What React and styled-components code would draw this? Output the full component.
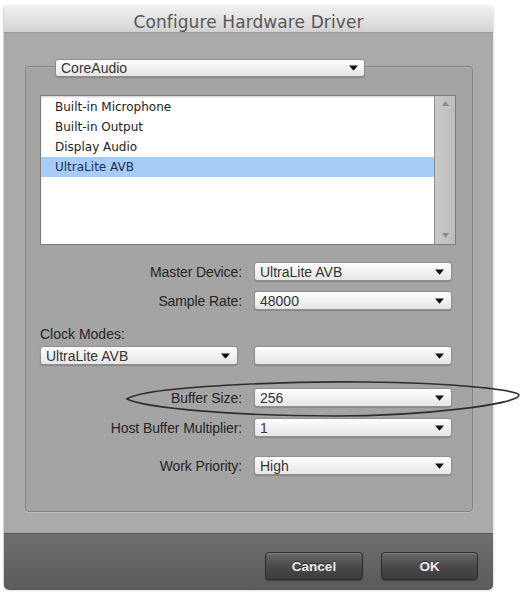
import React from "react";
import styled, { createGlobalStyle } from "styled-components";

const Global = createGlobalStyle`
  html, body { margin: 0; padding: 0; background: #ffffff; overflow: hidden; }
  body { font-family: "Liberation Sans", Arial, sans-serif; }
  * { box-sizing: border-box; }
`;

const Page = styled.div`
  width: 520px;
  height: 592px;
  padding: 5px 0 0 3px;
`;

const Window = styled.div`
  width: 490px;
  height: 585px;
  display: flex;
  flex-direction: column;
  border-left: 1px solid #d4d4d4;
  border-radius: 4px 4px 5px 5px;
  box-shadow: 1px 1px 2px rgba(0,0,0,0.12);
`;

const TitleBar = styled.div`
  height: 28px;
  flex: none;
  display: flex;
  align-items: center;
  justify-content: center;
  background: linear-gradient(#f2f2f2, #dadada 80%, #d0d0d0);
  border-bottom: 1px solid #9c9c9c;
  border-radius: 4px 4px 0 0;
`;

const Title = styled.div`
  font-family: "DejaVu Sans", sans-serif;
  font-size: 17px;
  color: #575757;
  letter-spacing: 0.1px;
  padding-top: 6px;
`;

const Body = styled.div`
  flex: 1;
  background: #aaaaaa;
  padding: 33px 20px 20px 21px;
  display: flex;
  flex-direction: column;
`;

const GroupBox = styled.div`
  flex: none;
  border: 1px solid #858585;
  border-radius: 4px;
  background: #a4a4a4;
  box-shadow: 0 1px 0 #bcbcbc, inset 0 1px 0 #b0b0b0;
  padding: 0 0 36px 0;
  display: flex;
  flex-direction: column;
`;

const Select = styled.div`
  position: relative;
  width: ${(p) => p.$w}px;
  height: ${(p) => p.$h || 19}px;
  margin: ${(p) => p.$m || "0"};
  display: flex;
  align-items: center;
  padding: 0 0 0 5px;
  background: linear-gradient(#fdfdfd, #f1f1f1 55%, #e6e6e6);
  border: 1px solid #8f8f8f;
  border-radius: 3px;
  box-shadow: 0 1px 1px rgba(0,0,0,0.18);
  font-size: 14px;
  color: #333333;
  justify-content: space-between;
`;

const Value = styled.span`
  white-space: nowrap;
  line-height: 1;
`;

const Arrow = styled.svg`
  width: 9px;
  height: 6px;
  margin-right: ${(p) => p.$r || 7}px;
  flex: none;
`;

const DropArrow = ({ r }) => (
  <Arrow $r={r} viewBox="0 0 9 6">
    <path d="M0 0.5 H9 L4.5 5.8 Z" fill="#111" />
  </Arrow>
);

const ListBox = styled.div`
  width: 416px;
  height: 150px;
  margin: 18px 0 0 14px;
  background: #ffffff;
  border: 1px solid #7d7d7d;
  display: flex;
  box-shadow: inset 0 1px 2px rgba(0,0,0,0.2);
`;

const Items = styled.div`
  flex: 1;
  padding-top: 1px;
  display: flex;
  flex-direction: column;
`;

const Item = styled.div`
  height: 20px;
  display: flex;
  align-items: center;
  padding-left: 14px;
  font-family: "DejaVu Sans", sans-serif;
  font-size: 12px;
  color: ${(p) => (p.$sel ? "#1c2c55" : "#222")};
  background: ${(p) => (p.$sel ? "#a7cdf6" : "transparent")};
`;

const ScrollBar = styled.div`
  width: 21px;
  flex: none;
  background: linear-gradient(90deg, #c9c9c9, #bdbdbd);
  border-left: 1px solid #8e8e8e;
  display: flex;
  flex-direction: column;
  justify-content: space-between;
  align-items: center;
  padding: 5px 0 6px;
`;

const SmallArrow = styled.svg`
  width: 7px;
  height: 5px;
`;

const Form = styled.div`
  padding-left: 14px;
  display: flex;
  flex-direction: column;
`;

const Row = styled.div`
  position: relative;
  display: grid;
  grid-template-columns: 202px 198px;
  column-gap: 12px;
  align-items: center;
  height: 19px;
  margin-top: ${(p) => p.$mt}px;
`;

const Label = styled.div`
  text-align: right;
  font-size: 14px;
  color: #262626;
  white-space: nowrap;
  letter-spacing: -0.1px;
`;

const SectionLabel = styled.div`
  margin-top: 16px;
  height: 16px;
  line-height: 16px;
  font-size: 14px;
  color: #262626;
`;

const Ellipse = styled.svg`
  position: absolute;
  left: 85px;
  top: -8px;
  width: 396px;
  height: 38px;
  overflow: visible;
  pointer-events: none;
`;

const Footer = styled.div`
  height: 57px;
  flex: none;
  background: linear-gradient(#6f6f6f, #5a5a5a);
  border-top: 1px solid #565656;
  border-radius: 0 0 5px 5px;
  display: flex;
  justify-content: flex-end;
  align-items: flex-start;
  gap: 18px;
  padding: 18px 15px 0 0;
`;

const Button = styled.button`
  width: ${(p) => p.$w}px;
  height: 28px;
  border: 1px solid #2e2e2e;
  border-radius: 4px;
  background: linear-gradient(#686868, #4a4a4a 50%, #3c3c3c);
  box-shadow: inset 0 1px 0 rgba(255,255,255,0.18), 0 1px 1px rgba(0,0,0,0.35);
  color: #ececec;
  font-family: "Liberation Sans", Arial, sans-serif;
  font-weight: bold;
  font-size: 13.5px;
  text-shadow: 0 -1px 0 rgba(0,0,0,0.5);
  padding: 0;
`;

export default function App() {
  const devices = ["Built-in Microphone", "Built-in Output", "Display Audio", "UltraLite AVB"];
  return (
    <Page>
      <Global />
      <Window>
        <TitleBar>
          <Title>Configure Hardware Driver</Title>
        </TitleBar>
        <Body>
          <GroupBox>
            <Select $w={310} $h={18} $m="-8px 0 0 29px">
              <Value>CoreAudio</Value>
              <DropArrow r={6} />
            </Select>
            <ListBox>
              <Items>
                {devices.map((d) => (
                  <Item key={d} $sel={d === "UltraLite AVB"}>{d}</Item>
                ))}
              </Items>
              <ScrollBar>
                <SmallArrow viewBox="0 0 7 5"><path d="M3.5 0 L7 5 H0 Z" fill="#8c8c8c" /></SmallArrow>
                <SmallArrow viewBox="0 0 7 5"><path d="M0 0 H7 L3.5 5 Z" fill="#8c8c8c" /></SmallArrow>
              </ScrollBar>
            </ListBox>
            <Form>
              <Row $mt={17}>
                <Label>Master Device:</Label>
                <Select $w={198}><Value>UltraLite AVB</Value><DropArrow /></Select>
              </Row>
              <Row $mt={10}>
                <Label>Sample Rate:</Label>
                <Select $w={198}><Value>48000</Value><DropArrow /></Select>
              </Row>
              <SectionLabel>Clock Modes:</SectionLabel>
              <Row $mt={4}>
                <Select $w={198}><Value>UltraLite AVB</Value><DropArrow /></Select>
                <Select $w={198}><Value></Value><DropArrow /></Select>
              </Row>
              <Row $mt={23}>
                <Label>Buffer Size:</Label>
                <Select $w={198}><Value>256</Value><DropArrow /></Select>
                <Ellipse viewBox="0 0 396 38">
                  <path
                    d="M2 19 C 20 6, 170 1, 240 2 C 330 3, 394 10, 394 15 C 394 24, 300 36, 210 36 C 110 36, 20 28, 2 19 Z"
                    fill="none"
                    stroke="#2e2e2e"
                    strokeWidth="1.6"
                  />
                </Ellipse>
              </Row>
              <Row $mt={11}>
                <Label>Host Buffer Multiplier:</Label>
                <Select $w={198}><Value>1</Value><DropArrow /></Select>
              </Row>
              <Row $mt={19}>
                <Label>Work Priority:</Label>
                <Select $w={198}><Value>High</Value><DropArrow /></Select>
              </Row>
            </Form>
          </GroupBox>
        </Body>
        <Footer>
          <Button $w={98}>Cancel</Button>
          <Button $w={97}>OK</Button>
        </Footer>
      </Window>
    </Page>
  );
}
